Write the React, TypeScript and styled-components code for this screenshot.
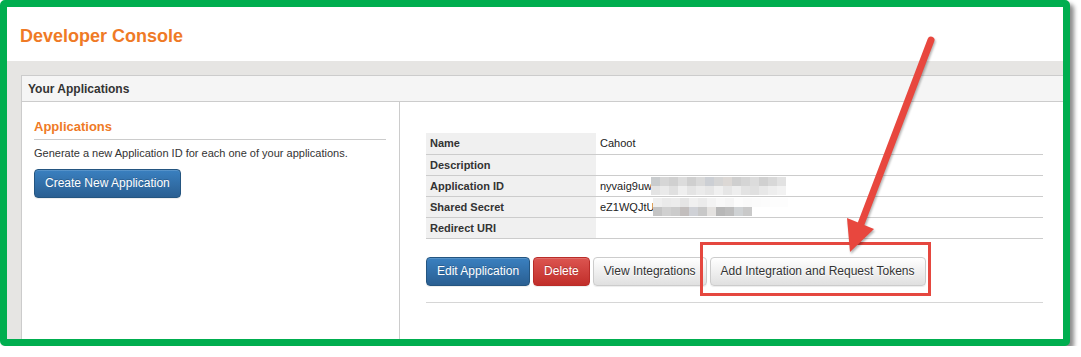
import React from 'react';
import styled, { createGlobalStyle } from 'styled-components';

const Global = createGlobalStyle`
  html, body { margin: 0; padding: 0; background: #fff; }
  body { font-family: "Liberation Sans", Arial, sans-serif; color: #333; }
  * { box-sizing: border-box; }
`;

const Frame = styled.div`
  position: relative;
  width: 1070px;
  height: 346px;
  border: 7px solid #00ae4f;
  border-radius: 5px;
  box-shadow: 4px 4px 4px rgba(0, 0, 0, 0.45);
  overflow: hidden;
  display: flex;
  flex-direction: column;
  background: #fff;
`;

const Header = styled.header`
  height: 54px;
  flex: none;
  display: flex;
  align-items: center;
  padding: 4px 0 0 13px;
`;

const Title = styled.h1`
  margin: 0;
  font-size: 18px;
  font-weight: bold;
  color: #ef7a26;
`;

const Stage = styled.div`
  flex: 1;
  min-height: 0;
  background: #e6e5e3;
  padding: 14px 0 0 14px;
  display: flex;
`;

const Panel = styled.section`
  flex: none;
  width: 1100px;
  border: 1px solid #ccc;
  border-bottom: none;
  background: #fff;
  display: flex;
  flex-direction: column;
`;

const PanelHeading = styled.div`
  height: 26px;
  flex: none;
  background: #f5f5f5;
  border-bottom: 1px solid #ccc;
  padding: 1px 6px 0;
  font-size: 12px;
  font-weight: bold;
  line-height: 24px;
  color: #333;
`;

const PanelBody = styled.div`
  flex: 1;
  display: grid;
  grid-template-columns: 378px 1fr;
`;

const LeftCol = styled.div`
  border-right: 1px solid #ccc;
  padding: 17px 13px 0 12px;
`;

const SectionTitle = styled.h2`
  margin: 0;
  font-size: 13px;
  line-height: 16px;
  font-weight: bold;
  color: #ef7a26;
  padding-bottom: 4px;
  border-bottom: 1px solid #ccc;
`;

const Hint = styled.p`
  margin: 7px 0 0;
  font-size: 11px;
  line-height: 13px;
  color: #333;
`;

const RightCol = styled.div`
  padding: 31px 0 0 26px;
`;

const Table = styled.table`
  width: 617px;
  border-collapse: collapse;
  font-size: 11px;
`;

const Row = styled.tr`
  height: 21px;
  border-bottom: 1px solid #ccc;
`;

const Label = styled.th`
  width: 170px;
  background: #f0f0f0;
  text-align: left;
  font-weight: bold;
  padding: 0 4px;
  color: #333;
`;

const Value = styled.td`
  padding: 0 4px;
  color: #222;
`;

const ValueWrap = styled.div`
  display: flex;
  align-items: center;
`;

const Mosaic = styled.div<{ $cols: number }>`
  display: grid;
  grid-template-columns: repeat(${(p) => p.$cols}, 9px);
  grid-auto-rows: 9px;
  margin-left: -1px;
`;

const Pixel = styled.span<{ $c: string }>`
  background: ${(p) => p.$c};
`;

const Actions = styled.div`
  display: flex;
  gap: 3px;
  margin-top: 18px;
`;

const Btn = styled.button<{ $kind: 'primary' | 'danger' | 'default' }>`
  font-family: "Liberation Sans", Arial, sans-serif;
  font-size: 12px;
  line-height: 17px;
  padding: 5px 10px;
  border-radius: 4px;
  border: 1px solid;
  cursor: pointer;
  white-space: nowrap;
  box-shadow: inset 0 1px 0 rgba(255, 255, 255, 0.15), 0 1px 1px rgba(0, 0, 0, 0.075);
  ${(p) =>
    p.$kind === 'primary'
      ? `background: linear-gradient(to bottom, #3a80c0 0%, #2a5f92 100%);
         border-color: #245580; color: #fff; text-shadow: 0 -1px 0 rgba(0,0,0,.2);`
      : p.$kind === 'danger'
      ? `background: linear-gradient(to bottom, #dc5550 0%, #c12e2a 100%);
         border-color: #b92c28; color: #fff; text-shadow: 0 -1px 0 rgba(0,0,0,.2);`
      : `background: linear-gradient(to bottom, #ffffff 0%, #e0e0e0 100%);
         border-color: #cccccc; color: #333; text-shadow: 0 1px 0 #fff;`}
`;

const Rule = styled.hr`
  width: 617px;
  margin: 16px 0 0;
  border: none;
  border-top: 1px solid #d6d6d6;
`;

const CreateBtn = styled(Btn)`
  margin-top: 9px;
`;

const Highlight = styled.div`
  position: absolute;
  left: 693px;
  top: 235px;
  width: 231px;
  height: 54px;
  border: 3px solid #e5473f;
  pointer-events: none;
`;

const ArrowLayer = styled.svg`
  position: absolute;
  left: 0;
  top: 0;
  pointer-events: none;
  filter: drop-shadow(1px 2px 1px rgba(0, 0, 0, 0.3));
`;

const idTop = ['#c9ccce','#d6d6d6','#d0d0d0','#dcdcdc','#cfcfcf','#d9d9d9','#cccfd4','#d5d5d5','#dcd8d5','#cfcfcf','#d5d5d5','#dcdcdc','#d0d0d0','#d8d8d8','#e2e2e2'];
const idBot = ['#e4e4e4','#eaeaea','#e0e0e0','#efefef','#e4e4e4','#ebebeb','#e6e6e6','#f0f0f0','#e6e6e6','#eeeeee','#e3e3e3','#e0e0e0','#e8e8e8','#eeeeee','#f2f2f2'];
const secTop = ['#efefef','#eaeaea','#ececec','#e5e5e5','#f0f0f0','#ebebeb','#f3f3f3','#f8f8f8','#f5f5f5','#fcfcfc','#fafafa','#fbfbfb','#fcfcfc','#fdfdfd','#fdfdfd'];
const secBot = ['#c4c4c4','#d0d0d0','#cbcbcb','#c2bebd','#cfd1d6','#c8c8c8','#e4e2e0','#b7b7b7','#bdbdbd','#cfd2d4','#c9c9c9','#ffffff','#ffffff','#ffffff','#ffffff'];

const renderMosaic = (top: string[], bot: string[]) => (
  <Mosaic $cols={top.length}>
    {top.map((c, i) => <Pixel key={'t' + i} $c={c} />)}
    {bot.map((c, i) => <Pixel key={'b' + i} $c={c} />)}
  </Mosaic>
);

export default function App() {
  return (
    <>
      <Global />
      <Frame>
        <Header>
          <Title>Developer Console</Title>
        </Header>
        <Stage>
          <Panel>
            <PanelHeading>Your Applications</PanelHeading>
            <PanelBody>
              <LeftCol>
                <SectionTitle>Applications</SectionTitle>
                <Hint>Generate a new Application ID for each one of your applications.</Hint>
                <CreateBtn $kind="primary">Create New Application</CreateBtn>
              </LeftCol>
              <RightCol>
                <Table>
                  <tbody>
                    <Row>
                      <Label>Name</Label>
                      <Value>Cahoot</Value>
                    </Row>
                    <Row>
                      <Label>Description</Label>
                      <Value></Value>
                    </Row>
                    <Row>
                      <Label>Application ID</Label>
                      <Value>
                        <ValueWrap>
                          <span>nyvaig9uw</span>
                          {renderMosaic(idTop, idBot)}
                        </ValueWrap>
                      </Value>
                    </Row>
                    <Row>
                      <Label>Shared Secret</Label>
                      <Value>
                        <ValueWrap>
                          <span>eZ1WQJtU</span>
                          {renderMosaic(secTop, secBot)}
                        </ValueWrap>
                      </Value>
                    </Row>
                    <Row>
                      <Label>Redirect URI</Label>
                      <Value></Value>
                    </Row>
                  </tbody>
                </Table>
                <Actions>
                  <Btn $kind="primary">Edit Application</Btn>
                  <Btn $kind="danger">Delete</Btn>
                  <Btn $kind="default">View Integrations</Btn>
                  <Btn $kind="default">Add Integration and Request Tokens</Btn>
                </Actions>
                <Rule />
              </RightCol>
            </PanelBody>
          </Panel>
        </Stage>
        <Highlight />
        <ArrowLayer width="1056" height="332" viewBox="7 7 1056 332">
          <line x1="931" y1="40" x2="861" y2="224" stroke="#e8473e" strokeWidth="7" strokeLinecap="round" />
          <polygon points="850,252 874,229 847,218" fill="#e8473e" />
        </ArrowLayer>
      </Frame>
    </>
  );
}
